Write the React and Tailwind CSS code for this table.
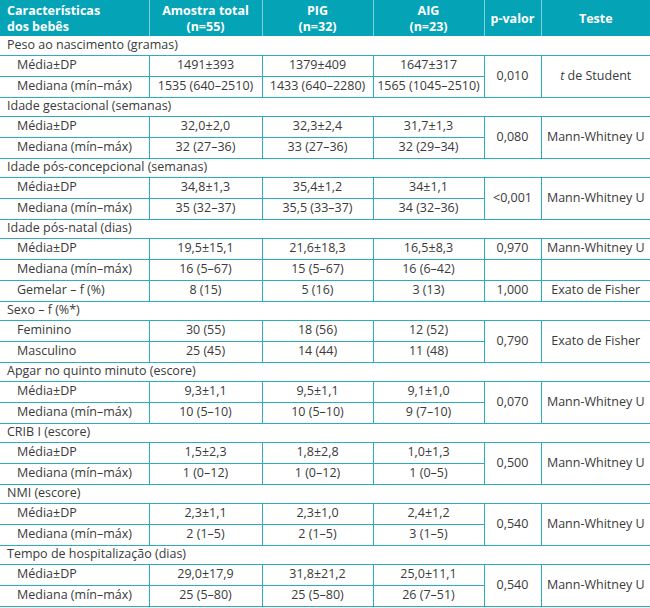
import React from "react";

const groups = [
  {
    title: "Peso ao nascimento (gramas)",
    rows: [
      ["Média±DP", "1491±393", "1379±409", "1647±317"],
      ["Mediana (mín–máx)", "1535 (640–2510)", "1433 (640–2280)", "1565 (1045–2510)"],
    ],
    p: "0,010",
    test: "student",
  },
  {
    title: "Idade gestacional (semanas)",
    rows: [
      ["Média±DP", "32,0±2,0", "32,3±2,4", "31,7±1,3"],
      ["Mediana (mín–máx)", "32 (27–36)", "33 (27–36)", "32 (29–34)"],
    ],
    p: "0,080",
    test: "Mann-Whitney U",
  },
  {
    title: "Idade pós-concepcional (semanas)",
    rows: [
      ["Média±DP", "34,8±1,3", "35,4±1,2", "34±1,1"],
      ["Mediana (mín–máx)", "35 (32–37)", "35,5 (33–37)", "34 (32–36)"],
    ],
    p: "<0,001",
    test: "Mann-Whitney U",
  },
  {
    title: "Idade pós-natal (dias)",
    rows: [
      ["Média±DP", "19,5±15,1", "21,6±18,3", "16,5±8,3"],
      ["Mediana (mín–máx)", "16 (5–67)", "15 (5–67)", "16 (6–42)"],
    ],
    perRow: [
      ["0,970", "Mann-Whitney U"],
      ["", ""],
    ],
    extra: ["Gemelar – f (%)", "8 (15)", "5 (16)", "3 (13)", "1,000", "Exato de Fisher"],
  },
  {
    title: "Sexo – f (%*)",
    rows: [
      ["Feminino", "30 (55)", "18 (56)", "12 (52)"],
      ["Masculino", "25 (45)", "14 (44)", "11 (48)"],
    ],
    p: "0,790",
    test: "Exato de Fisher",
  },
  {
    title: "Apgar no quinto minuto (escore)",
    rows: [
      ["Média±DP", "9,3±1,1", "9,5±1,1", "9,1±1,0"],
      ["Mediana (mín–máx)", "10 (5–10)", "10 (5–10)", "9 (7–10)"],
    ],
    p: "0,070",
    test: "Mann-Whitney U",
  },
  {
    title: "CRIB I (escore)",
    rows: [
      ["Média±DP", "1,5±2,3", "1,8±2,8", "1,0±1,3"],
      ["Mediana (mín–máx)", "1 (0–12)", "1 (0–12)", "1 (0–5)"],
    ],
    p: "0,500",
    test: "Mann-Whitney U",
  },
  {
    title: "NMI (escore)",
    rows: [
      ["Média±DP", "2,3±1,1", "2,3±1,0", "2,4±1,2"],
      ["Mediana (mín–máx)", "2 (1–5)", "2 (1–5)", "3 (1–5)"],
    ],
    p: "0,540",
    test: "Mann-Whitney U",
  },
  {
    title: "Tempo de hospitalização (dias)",
    rows: [
      ["Média±DP", "29,0±17,9", "31,8±21,2", "25,0±11,1"],
      ["Mediana (mín–máx)", "25 (5–80)", "25 (5–80)", "26 (7–51)"],
    ],
    p: "0,540",
    test: "Mann-Whitney U",
  },
];

const cell = "border border-[#2aaebf] px-0.5 h-[21px] leading-none whitespace-nowrap";

function Test({ value }) {
  if (value === "student") {
    return (
      <>
        <i>t</i> de Student
      </>
    );
  }
  return value;
}

function DataCells({ row }) {
  return (
    <>
      <td className={`${cell} border-l-0 pl-[17px] text-left`}>{row[0]}</td>
      <td className={`${cell} text-center`}>{row[1]}</td>
      <td className={`${cell} text-center`}>{row[2]}</td>
      <td className={`${cell} text-center`}>{row[3]}</td>
    </>
  );
}

export default function App() {
  return (
    <div className="w-[650px] bg-white text-[#3a3a3a] font-['Open_Sans',sans-serif] text-[12.5px]">
      <table className="w-full border-collapse table-fixed">
        <colgroup>
          <col className="w-[149px]" />
          <col className="w-[113px]" />
          <col className="w-[111px]" />
          <col className="w-[111px]" />
          <col className="w-[57px]" />
          <col className="w-[109px]" />
        </colgroup>
        <thead>
          <tr className="bg-[#05a3b6] text-white font-bold h-[36px] text-[12.5px] leading-[16px]">
            <th className="text-left px-[7px] pt-px border-r border-[#7fd0da]">
              <div>Características</div>
              <div>dos bebês</div>
            </th>
            <th className="text-center pt-px border-r border-[#7fd0da]">
              <div>Amostra total</div>
              <div>(n=55)</div>
            </th>
            <th className="text-center pt-px border-r border-[#7fd0da]">
              <div>PIG</div>
              <div>(n=32)</div>
            </th>
            <th className="text-center pt-px border-r border-[#7fd0da]">
              <div>AIG</div>
              <div>(n=23)</div>
            </th>
            <th className="text-center pt-px border-r border-[#7fd0da]">p-valor</th>
            <th className="text-center pt-px">Teste</th>
          </tr>
        </thead>
        <tbody>
          {groups.map((g) => (
            <React.Fragment key={g.title}>
              <tr>
                <td colSpan={6} className="border-b border-[#2aaebf] px-[7px] h-[19px] leading-none">
                  {g.title}
                </td>
              </tr>
              {g.rows.map((row, i) => (
                <tr key={i}>
                  <DataCells row={row} />
                  {g.perRow ? (
                    <>
                      <td className={`${cell} text-center`}>{g.perRow[i][0]}</td>
                      <td className={`${cell} border-r-0 text-center`}>{g.perRow[i][1]}</td>
                    </>
                  ) : (
                    i === 0 && (
                      <>
                        <td rowSpan={2} className={`${cell} text-center`}>
                          {g.p}
                        </td>
                        <td rowSpan={2} className={`${cell} border-r-0 text-center`}>
                          <Test value={g.test} />
                        </td>
                      </>
                    )
                  )}
                </tr>
              ))}
              {g.extra && (
                <tr>
                  <DataCells row={g.extra} />
                  <td className={`${cell} text-center`}>{g.extra[4]}</td>
                  <td className={`${cell} border-r-0 text-center`}>{g.extra[5]}</td>
                </tr>
              )}
            </React.Fragment>
          ))}
        </tbody>
      </table>
    </div>
  );
}
